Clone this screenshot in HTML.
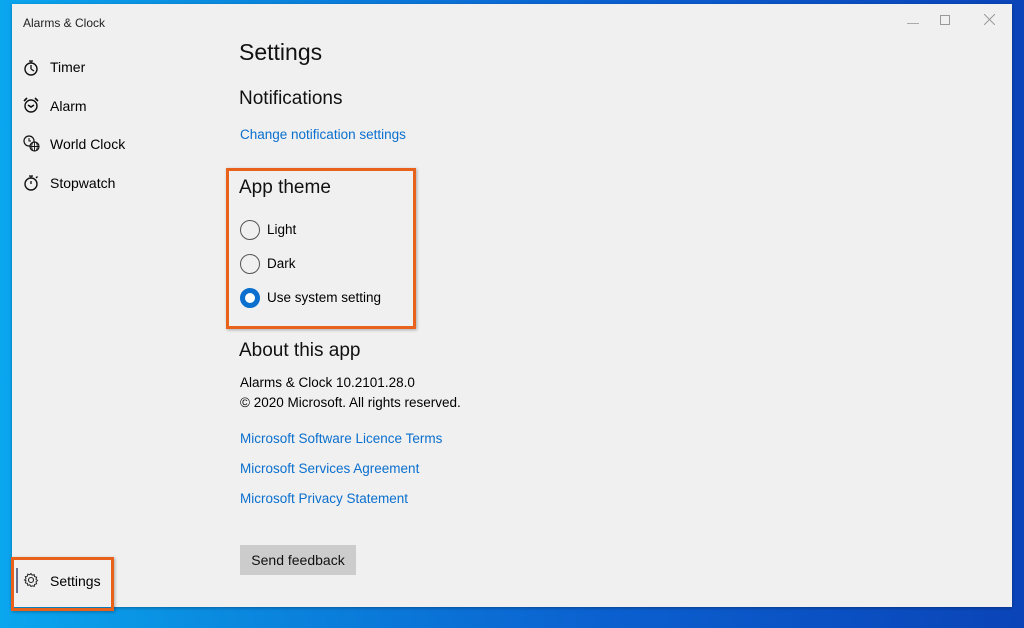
<!DOCTYPE html>
<html><head><meta charset="utf-8"><style>
*{margin:0;padding:0;box-sizing:border-box}
body{width:1024px;height:628px;overflow:hidden;position:relative;font-family:"Liberation Sans",sans-serif;
background:linear-gradient(90deg,#0aa6ee 0%,#0a8ce0 20%,#0b5fcf 60%,#0a44b8 100%)}
.win{position:absolute;left:12px;top:4px;width:1000px;height:603px;background:#f0f0f0;box-shadow:0 1px 3px rgba(0,0,0,.3)}
.t{position:absolute;white-space:nowrap;color:#000}
.link{color:#0a6fce;font-size:13.5px}
.nav{font-size:14px}
.h{font-size:19px;color:#111}
.radio{position:absolute;width:20px;height:20px;border:1.3px solid #555;border-radius:50%}
.box{position:absolute;border:3px solid #e8621c;box-shadow:1px 1px 3px rgba(0,0,0,.3)}
svg{position:absolute}
</style></head><body>
<div class="win">
<div class="t" style="left:11px;top:12px;font-size:12px;color:#222">Alarms &amp; Clock</div>
<div class="t" style="left:895px;width:12px;border-top:1px solid #aaa;top:19px"></div>
<div style="position:absolute;left:928px;top:11px;width:10px;height:10px;border:1px solid #999"></div>
<svg style="left:972px;top:10px" width="11" height="11"><path d="M0 0L11 11M11 0L0 11" stroke="#999" stroke-width="1"/></svg>

<svg style="left:11px;top:55px" width="16" height="17" viewBox="0 0 16 17"><circle cx="8" cy="10" r="6" fill="none" stroke="#111" stroke-width="1.4"/><path d="M6 2h4M8 2v2M8 10V6M8 10l3 2" stroke="#111" stroke-width="1.3" fill="none"/></svg>
<div class="t nav" style="left:38px;top:55px">Timer</div>
<svg style="left:11px;top:93px" width="16" height="16" viewBox="0 0 16 16"><circle cx="8" cy="9" r="6" fill="none" stroke="#111" stroke-width="1.4"/><path d="M1 4l3-3M15 4l-3-3M5 8l3 2 3-2" stroke="#111" stroke-width="1.6" fill="none"/></svg>
<div class="t nav" style="left:38px;top:94px">Alarm</div>
<svg style="left:11px;top:131px" width="17" height="17" viewBox="0 0 17 17"><circle cx="6" cy="6" r="5" fill="none" stroke="#111" stroke-width="1.2"/><path d="M6 3v3h2" stroke="#111" fill="none"/><circle cx="11.5" cy="11.5" r="4.5" fill="#f0f0f0" stroke="#111" stroke-width="1.2"/><path d="M7 11.5h9M11.5 7v9M9.5 8c-1 2-1 5 0 7M13.5 8c1 2 1 5 0 7" stroke="#111" stroke-width=".9" fill="none"/></svg>
<div class="t nav" style="left:38px;top:132px">World Clock</div>
<svg style="left:11px;top:170px" width="16" height="17" viewBox="0 0 16 17"><circle cx="8" cy="10" r="6" fill="none" stroke="#111" stroke-width="1.4"/><path d="M6 2h4M8 2v2M8 10V7M13 4l1.5-1.5" stroke="#111" stroke-width="1.3" fill="none"/></svg>
<div class="t nav" style="left:38px;top:171px">Stopwatch</div>

<div style="position:absolute;left:4px;top:564px;width:2px;height:25px;background:#6a7090"></div>
<svg style="left:11px;top:568px" width="16" height="16" viewBox="0 0 16 16"><circle cx="8" cy="8" r="2.5" fill="none" stroke="#222" stroke-width="1.1"/><path d="M8 1.5l1.2 1.7 2-.6.4 2 2 .6-.6 2 1.5 1.3-1.5 1.3.6 2-2 .6-.4 2-2-.6L8 14.5l-1.2-1.7-2 .6-.4-2-2-.6.6-2L1.5 8l1.5-1.3-.6-2 2-.6.4-2 2 .6z" fill="none" stroke="#222" stroke-width="1"/></svg>
<div class="t nav" style="left:38px;top:569px">Settings</div>

<div class="t" style="left:227px;top:35px;font-size:23px;color:#111">Settings</div>
<div class="t h" style="left:227px;top:84px">Notifications</div>
<div class="t link" style="left:228px;top:123px">Change notification settings</div>
<div class="t h" style="left:227px;top:173px">App theme</div>
<div class="radio" style="left:228px;top:216px"></div>
<div class="t nav" style="left:255px;top:218px;font-size:13.5px">Light</div>
<div class="radio" style="left:228px;top:250px"></div>
<div class="t nav" style="left:255px;top:252px;font-size:13.5px">Dark</div>
<div class="radio" style="left:228px;top:284px;border:5.5px solid #0a6fce;background:#fff"></div>
<div class="t nav" style="left:255px;top:286px;font-size:13.5px">Use system setting</div>
<div class="t h" style="left:227px;top:336px">About this app</div>
<div class="t" style="left:228px;top:371px;font-size:13.5px">Alarms &amp; Clock 10.2101.28.0</div>
<div class="t" style="left:228px;top:391px;font-size:13.5px">© 2020 Microsoft. All rights reserved.</div>
<div class="t link" style="left:228px;top:427px">Microsoft Software Licence Terms</div>
<div class="t link" style="left:228px;top:457px">Microsoft Services Agreement</div>
<div class="t link" style="left:228px;top:487px">Microsoft Privacy Statement</div>
<div style="position:absolute;left:228px;top:541px;width:116px;height:30px;background:#cccccc;font-size:14px;text-align:center;line-height:30px;color:#111">Send feedback</div>
</div>
<div class="box" style="left:226px;top:168px;width:190px;height:161px"></div>
<div class="box" style="left:11px;top:557px;width:103px;height:54px"></div>
</body></html>
